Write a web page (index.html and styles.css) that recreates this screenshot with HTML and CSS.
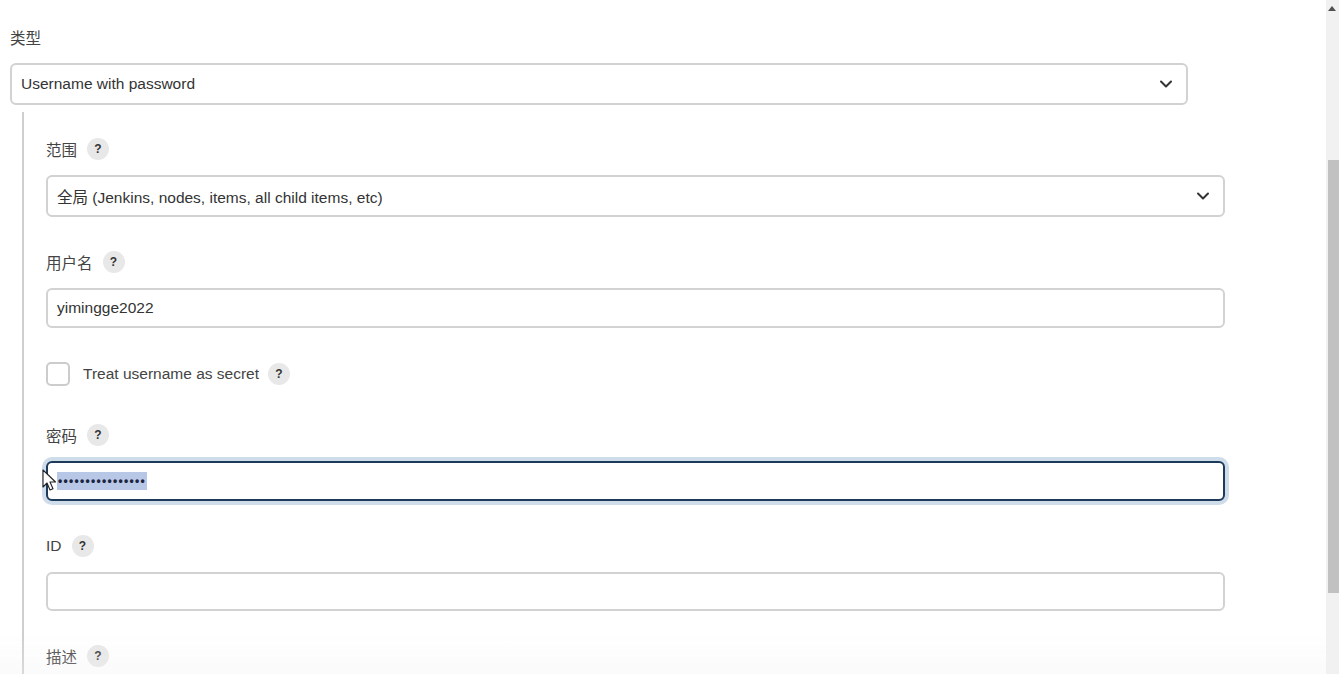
FILE: index.html
```html
<!DOCTYPE html>
<html lang="zh">
<head>
    <meta charset="UTF-8">
    <title>New credentials - Jenkins</title>
    <link rel="stylesheet" href="styles.css">
</head>
<body>
    <div class="page">
        <main class="form-body">
            <div class="field">
                <div class="field-label">类型</div>
                <div class="select select-outer">
                    <span>Username with password</span>
                    <svg class="chevron" viewBox="0 0 14 14" width="14" height="14"><path d="M2 4.5l5 5 5-5" fill="none" stroke="#333" stroke-width="2" stroke-linecap="round" stroke-linejoin="round"/></svg>
                </div>
            </div>

            <div class="nested">
                <div class="field">
                    <div class="field-label">范围 <span class="help">?</span></div>
                    <div class="select">
                        <span>全局 (Jenkins, nodes, items, all child items, etc)</span>
                        <svg class="chevron" viewBox="0 0 14 14" width="14" height="14"><path d="M2 4.5l5 5 5-5" fill="none" stroke="#333" stroke-width="2" stroke-linecap="round" stroke-linejoin="round"/></svg>
                    </div>
                </div>

                <div class="field">
                    <div class="field-label">用户名 <span class="help">?</span></div>
                    <div class="text-input">yimingge2022</div>
                </div>

                <div class="field check-row">
                    <span class="checkbox"></span>
                    <span class="check-label">Treat username as secret</span>
                    <span class="help">?</span>
                </div>

                <div class="field">
                    <div class="field-label">密码 <span class="help">?</span></div>
                    <div class="text-input focused">
                        <span class="selected-dots">••••••••••••••••</span>
                        <!-- mouse pointer over the field -->
                        <svg class="pointer" viewBox="0 0 14 22" width="14" height="22"><path d="M1 1v17l4-4 3 7 3-1.3-3-6.7h5.5z" fill="#fff" stroke="#222" stroke-width="1.1" stroke-linejoin="round"/></svg>
                    </div>
                </div>

                <div class="field">
                    <div class="field-label">ID <span class="help">?</span></div>
                    <div class="text-input id-input"></div>
                </div>

                <div class="field">
                    <div class="field-label">描述 <span class="help">?</span></div>
                </div>
            </div>
        </main>

        <aside class="scrollbar">
            <div class="scroll-arrow"></div>
            <div class="scroll-thumb"></div>
        </aside>
    </div>
    <div class="bottom-fade"></div>
</body>
</html>
```

FILE: styles.css
```css
/* Base */
* {
    margin: 0;
    padding: 0;
    box-sizing: border-box;
}

html, body {
    height: 100%;
    overflow: hidden;
}

body {
    background: #ffffff;
    color: #333333;
    font-family: 'Liberation Sans', Arial, 'Noto Sans CJK SC', sans-serif;
    font-size: 15.5px;
}

.page {
    display: flex;
    height: 100%;
}

.form-body {
    flex: 1;
    padding: 26px 0 0 10px;
}

/* Fields */
.field {
    margin-bottom: 34px;
}

.field-label {
    display: flex;
    align-items: center;
    gap: 10px;
    height: 22px;
    margin-bottom: 15px;
    color: #444444;
    font-size: 15.5px;
}

.help {
    display: inline-flex;
    align-items: center;
    justify-content: center;
    width: 22px;
    height: 22px;
    border-radius: 50%;
    background: #e8e8e8;
    color: #333333;
    font-size: 12px;
    font-weight: 700;
}

.select,
.text-input {
    display: flex;
    align-items: center;
    width: 1179px;
    height: 40px;
    padding: 0 9px;
    border: 2px solid #d2d2d2;
    border-radius: 6px;
    background: #ffffff;
    color: #333333;
}

.select {
    justify-content: space-between;
    height: 42px;
    padding-right: 13px;
}

.select-outer {
    width: 1178px;
}

.chevron {
    flex-shrink: 0;
}

/* Nested credential block */
.nested {
    margin: -27px 0 0 12px;
    padding: 26px 0 0 22px;
    border-left: 2px solid #cfcfcf;
    min-height: 600px;
}

.check-row {
    display: flex;
    align-items: center;
    height: 24px;
    margin-top: 1px;
    margin-bottom: 38px;
}

.checkbox {
    width: 24px;
    height: 24px;
    border: 2px solid #cccccc;
    border-radius: 5px;
    margin-right: 13px;
}

.check-label {
    color: #444444;
    margin-right: 9px;
}

.text-input.focused {
    position: relative;
    border-color: #1e3a5a;
    box-shadow: 0 0 0 4px #cfdcea;
}

.id-input {
    height: 39px;
}

.selected-dots {
    background: #b9c7e6;
    color: #1a2540;
    font-size: 12px;
    font-weight: 700;
    letter-spacing: 1.3px;
    line-height: 18px;
    padding: 0 1px;
}

.pointer {
    position: absolute;
    left: -6px;
    top: 6px;
}

/* Scrollbar */
.scrollbar {
    width: 13px;
    background: #f1f1f1;
    display: flex;
    flex-direction: column;
    align-items: flex-end;
}

.scroll-arrow {
    width: 0;
    height: 0;
    margin: 6px 3px 0 0;
    border-left: 4px solid transparent;
    border-right: 4px solid transparent;
    border-bottom: 5px solid #505050;
}

.scroll-thumb {
    width: 11px;
    height: 433px;
    margin-top: 149px;
    background: #c1c1c1;
}

.bottom-fade {
    position: fixed;
    left: 0;
    right: 13px;
    bottom: 0;
    height: 40px;
    background: linear-gradient(rgba(245, 245, 245, 0), rgba(240, 240, 240, 0.3));
    pointer-events: none;
}
```
